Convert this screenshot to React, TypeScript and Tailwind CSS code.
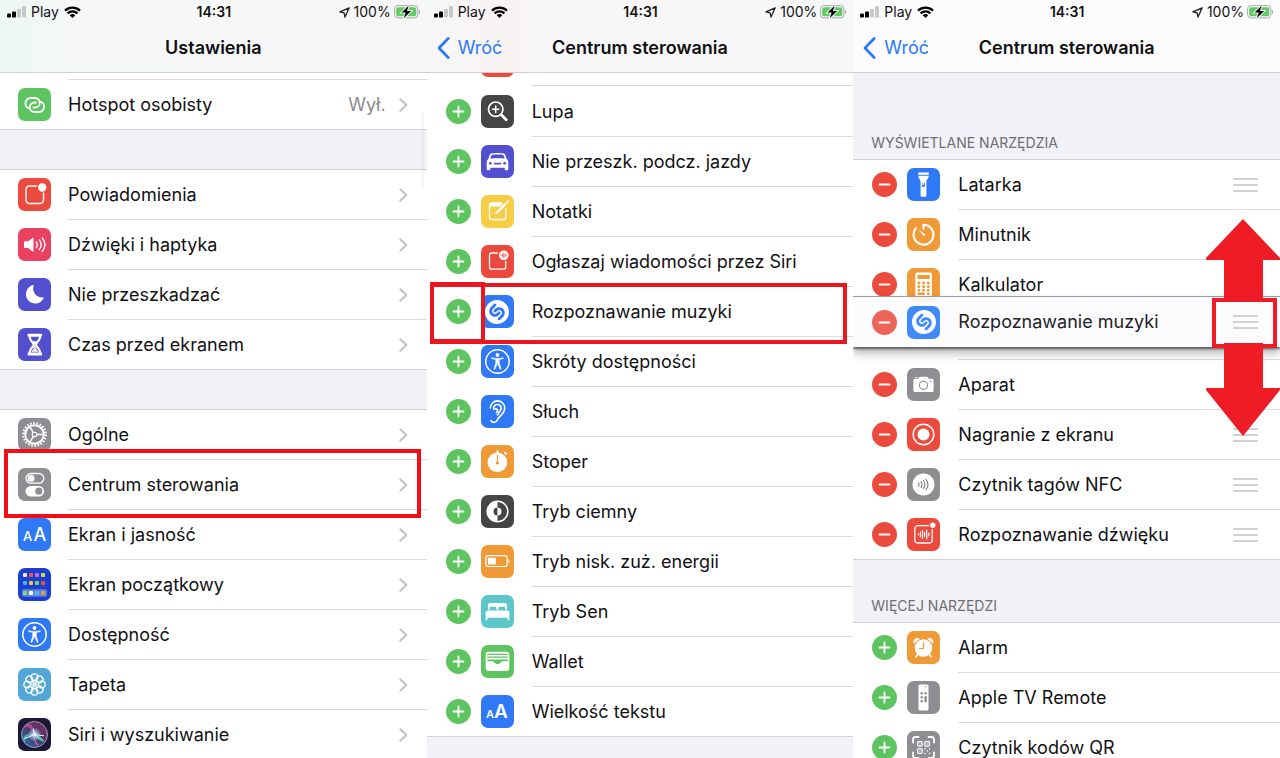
import type { ReactNode } from 'react';
import { SiShazam } from 'react-icons/si';

type Item = {
  label: string;
  tile: string;
  icon: ReactNode;
  value?: string;
  marked?: boolean;
  fixed?: boolean;
};

const BLUE = 'bg-[#2f78f6]';
const GREEN = 'bg-[#5ec460]';
const RED = 'bg-[#ec4a3c]';
const INDIGO = 'bg-[#5350cf]';
const GRAY = 'bg-[#8e8e92]';
const ORANGE = 'bg-[#f09a37]';
const DARK = 'bg-[#454547]';

/* ---------- tile icons, all on a 33 x 33 grid ---------- */

function Glyph({ children }: { children: ReactNode }) {
  return (
    <svg viewBox="0 0 33 33" className="size-full" fill="none" stroke="#fff" strokeLinecap="round" strokeLinejoin="round" aria-hidden="true">
      {children}
    </svg>
  );
}

const hotspot = (
  <Glyph>
    <path strokeWidth="1.8" d="M10.6 20.3A5.4 5.4 0 0 1 12.5 10H17a4.7 4.7 0 0 1 0 9.5h-1.5M22.9 13.7A5.4 5.4 0 0 1 21 24h-4.5a4.7 4.7 0 0 1 0-9.5H18" />
  </Glyph>
);

const notifications = (
  <Glyph>
    <path strokeWidth="1.4" d="M18.5 8h-7A3.5 3.5 0 0 0 8 11.5V22a3.5 3.5 0 0 0 3.5 3.500H22a3.500 3.500 0 0 0 3.500-3.500V15" />
    <circle cx="24.200" cy="9.500" r="4.200" fill="#fff" stroke="none" />
  </Glyph>
);

const sounds = (
  <Glyph>
    <path fill="#fff" stroke="none" d="M6 14.200c0-.6.300-.9.900-.9h3.300l4.300-3.400c.5-.4 1-.2 1 .5v12.700c0 .7-.5.900-1 .5l-4.300-3.500H6.900c-.6 0-.9-.3-.9-.9z" />
    <path strokeWidth="1.400" d="M18.300 13.900c1.200 1.700 1.200 3.800 0 5.600M21.300 11.900c2.300 3 2.300 6.600 0 9.600M24.300 10c3.300 4.200 3.300 9.200 0 13.400" />
  </Glyph>
);

const moon = (
  <Glyph>
    <path fill="#fff" stroke="none" d="M15.700 7.600c.4-.3 0-.7-.5-.5A9.300 9.300 0 1 0 25.700 20c.2-.5-.2-.8-.6-.6A8.800 8.800 0 0 1 15.700 7.600z" />
  </Glyph>
);

const hourglass = (
  <Glyph>
    <path fill="#fff" stroke="none" d="M10.600 5.800h12.500c.7 0 1 .4 1 1v1c0 .5-.3.900-.9 1-.2 3.500-2.700 5.300-4.200 7.900 1.500 2.600 4 4.400 4.200 7.900.6.100.9.500.9 1v1c0 .6-.3 1-1 1H10.600c-.7 0-1-.4-1-1v-1c0-.5.300-.9.900-1 .2-3.500 2.700-5.300 4.200-7.900-1.500-2.600-4-4.400-4.200-7.900-.6-.1-.9-.5-.9-1v-1c0-.6.300-1 1-1z" />
    <path fill="#5350cf" stroke="none" d="M12.700 8.800H21c-.3 2-1.300 3.300-2.600 5.200l-1 1.800v3.500c2 1.300 3.400 3 3.600 5.300h-8.300c.2-2.300 1.600-4 3.600-5.300v-3.500l-1-1.800c-1.300-1.900-2.300-3.200-2.600-5.200z" />
    <path fill="#fff" stroke="none" d="M14.500 13.300h4.700l-1.700 3v4l3 3.400h-7.300l3-3.400v-4z" />
  </Glyph>
);

const gear = (
  <Glyph>
    <circle cx="16.500" cy="16.500" r="11.300" strokeWidth="2.200" strokeLinecap="butt" strokeDasharray="1.600 1.630" />
    <circle cx="16.500" cy="16.500" r="9.300" strokeWidth="2" />
    <circle cx="16.500" cy="16.500" r="2.300" strokeWidth="1.100" />
    <path strokeWidth="1.400" d="M19 16.500h7M15.200 14.400l-3.600-6M15.200 18.600l-3.600 6" />
  </Glyph>
);

const toggles = (
  <Glyph>
    <rect x="8" y="5.500" width="17.800" height="9.700" rx="4.850" strokeWidth="1.300" />
    <circle cx="13" cy="10.300" r="3.500" fill="#fff" stroke="none" />
    <rect x="7.500" y="17.900" width="18.700" height="10.700" rx="5.350" fill="#fff" stroke="none" />
    <circle cx="20.800" cy="23.200" r="3.600" fill="#8e8e92" stroke="none" />
  </Glyph>
);

const displaySize = (
  <Glyph>
    <g fill="#fff" stroke="none" className="font-['Inter',sans-serif] font-medium">
      <text x="5" y="23" fontSize="13">A</text>
      <text x="15.500" y="23" fontSize="18">A</text>
    </g>
  </Glyph>
);

const textSize = (
  <Glyph>
    <g fill="#fff" stroke="none" className="font-['Inter',sans-serif] font-semibold">
      <text x="5" y="23" fontSize="11">A</text>
      <text x="13" y="23" fontSize="19">A</text>
    </g>
  </Glyph>
);

const homeDots = [
  ['#f3ead0', '#ee5a4f', '#d765d8', '#c9e04a'],
  ['#41b4f0', '#f5c23a', '#6fd66a', '#f0512f'],
  ['#7fdc63', '#ffffff', '#55b8f5', '#f29a3a'],
];
const homeRows = [5, 13, 23];

const homeScreen = (
  <Glyph>
    <rect x="4" y="21.200" width="25" height="7.600" rx="2" fill="#5f86dc" stroke="none" />
    {homeDots.map((row, r) =>
      row.map((fill, c) => (
        <rect key={`${r}-${c}`} x={5 + c * 6} y={homeRows[r]} width="4" height="4" rx="1" fill={fill} stroke="none" />
      )),
    )}
  </Glyph>
);

const accessibility = (
  <Glyph>
    <circle cx="16.500" cy="16.500" r="11.700" strokeWidth="1.500" />
    <circle cx="16.500" cy="10" r="1.900" fill="#fff" stroke="none" />
    <path fill="#fff" strokeWidth=".5" d="M10.700 12.700l4.600.7h2.400l4.600-.7v.9l-4 1v3.500l1.800 6-.9.400-2.500-5.800h-.4l-2.500 5.800-.9-.4 1.800-6v-3.500l-4-1z" />
  </Glyph>
);

const wallpaper = (
  <Glyph>
    {[0, 45, 90, 135, 180, 225, 270, 315].map((a) => (
      <circle key={a} cx="16.500" cy="9.200" r="3.300" strokeWidth="1.300" transform={`rotate(${a} 16.500 16.500)`} />
    ))}
    {[0, 60, 120, 180, 240, 300].map((a) => (
      <circle key={a} cx="16.500" cy="14" r="1.800" strokeWidth=".8" transform={`rotate(${a} 16.500 16.500)`} />
    ))}
  </Glyph>
);

const siri = (
  <Glyph>
    <defs>
      <linearGradient id="siri-orb" x1="0" y1="1" x2="1" y2="0">
        <stop offset="0" stopColor="#2b9fd0" />
        <stop offset=".5" stopColor="#59407f" />
        <stop offset="1" stopColor="#a4335f" />
      </linearGradient>
      <radialGradient id="siri-core">
        <stop offset="0" stopColor="#fff" />
        <stop offset=".4" stopColor="#d5f0ff" stopOpacity=".6" />
        <stop offset="1" stopColor="#d5f0ff" stopOpacity="0" />
      </radialGradient>
    </defs>
    <circle cx="16.500" cy="16.500" r="13" fill="url(#siri-orb)" stroke="#a9a7c4" strokeWidth=".9" fillOpacity=".75" />
    <path fill="#e15a9c" fillOpacity=".6" stroke="none" d="M16.500 16.500C12 9 9.500 7.500 5.500 10c3-6 10-7 11 6.500z" />
    <path fill="#3fd6c0" fillOpacity=".7" stroke="none" d="M16.500 16.500C10 16 7 20 6.500 25c-4-6 2-11 10-8.500z" />
    <path fill="#4de0b0" fillOpacity=".8" stroke="none" d="M16.500 16.500c5 1 8 3 9.800 7.500-4.800-1-7.800-3-9.800-7.500z" />
    <path fill="#f17ab6" stroke="none" d="M16 16.500c.8 4 1.500 8 5 11-3.500-.5-5-5-5-11z" />
    <path stroke="#dff6ff" strokeWidth="1.100" d="M7 20.500l9.500-4 9 1.200M16.500 16.500l-1-5.500" />
    <circle cx="16.500" cy="16.500" r="7" fill="url(#siri-core)" stroke="none" />
  </Glyph>
);

const magnifier = (
  <Glyph>
    <circle cx="14.700" cy="14.200" r="7.200" strokeWidth="1.700" />
    <path strokeWidth="1.500" d="M11.500 14.200h6.400M14.700 11v6.400" />
    <path strokeWidth="2.800" d="M20.500 20l4.700 4.700" />
  </Glyph>
);

const car = (
  <Glyph>
    <path fill="#fff" stroke="none" d="M10 8.600c2-.9 11-.9 13 0 1.300.7 2 3 2.600 5.400C27 15 27.300 16 27.300 18v6c0 .9-.4 1.300-1.200 1.300h-1.200c-.8 0-1.200-.4-1.200-1.300v-1.200H9.300V24c0 .9-.4 1.300-1.200 1.300H6.900c-.8 0-1.200-.4-1.200-1.300v-6c0-2 .3-3 1.700-4C8 11.600 8.700 9.300 10 8.600z" />
    <path fill="#5350cf" stroke="none" d="M11 10c2-.6 9-.6 11 0 .8.400 1.300 2 1.700 3.500-4-.5-10.400-.5-14.400 0C9.700 12 10.200 10.400 11 10z" />
    <circle cx="9.300" cy="18.300" r="1.400" fill="#5350cf" stroke="none" />
    <circle cx="23.700" cy="18.300" r="1.400" fill="#5350cf" stroke="none" />
    <path stroke="#5350cf" strokeWidth="1.600" d="M13.500 18.600h6" />
  </Glyph>
);

const notes = (
  <Glyph>
    <path strokeWidth="1.300" d="M24.700 14v8.500a2 2 0 0 1-2 2H10.500a2 2 0 0 1-2-2V10a2 2 0 0 1 2-2H20" />
    <path fill="#fff" stroke="none" d="M8.500 8h14l-3.500 3.500H8.500z" />
    <path stroke="#f7cd46" strokeWidth="4.500" d="M16 17.500l10-10" />
    <path strokeWidth="2.400" strokeLinecap="butt" d="M16 17.300l9-9" />
    <path strokeWidth="2.400" d="M26.600 6.900l.4-.4" />
    <path fill="#fff" stroke="none" d="M14 19.300l1-2.700 1.700 1.700z" />
  </Glyph>
);

const announce = (
  <Glyph>
    <path strokeWidth="1.300" d="M16.500 8H11a2.500 2.500 0 0 0-2.500 2.500v11.200a2.500 2.500 0 0 0 2.500 2.500h11.200a2.500 2.500 0 0 0 2.500-2.500V16.500" />
    <circle cx="22.800" cy="10.300" r="4.800" fill="#fff" stroke="none" />
    <path stroke="#ec4a3c" strokeWidth=".8" d="M20 9.900v.8M21.400 9v2.600M22.800 8v4.600M24.200 9v2.600M25.600 9.900v.8" />
  </Glyph>
);

const ear = (
  <Glyph>
    <g strokeWidth="1.500" transform="translate(2.800 3.700) scale(1.100)">
      <path d="M6 8.500a6.500 6.500 0 1 1 13 0c0 6-5.500 7-6.500 10.500-.7 2.700-5 3.500-6 .8" />
      <path d="M9 9.500c-.3-5.500 7-5.500 6.800-.8-.1 2.600-2.600 3.600-3.300 6" />
      <path d="M10.300 9.300c2.200-.4 3 1.800 1.300 3.200" />
    </g>
  </Glyph>
);

const stopwatch = (
  <Glyph>
    <circle cx="16.400" cy="17.400" r="9.800" fill="#fff" stroke="none" />
    <path strokeWidth="2.400" d="M16.400 6.700v1.800" />
    <path strokeWidth="1.700" d="M23.700 7.700l1.500 1.300" />
    <path stroke="#f09a37" strokeWidth="1.100" d="M16.400 10.200v7" />
    <circle cx="16.400" cy="18" r="1.600" fill="#f09a37" stroke="none" />
  </Glyph>
);

const darkMode = (
  <Glyph>
    <circle cx="16.500" cy="16.500" r="10.300" strokeWidth="1.500" />
    <path fill="#fff" stroke="none" d="M16.500 6.200a10.300 10.300 0 0 0 0 20.600z" />
    <path fill="#454547" stroke="none" d="M16.500 12.500a4 4 0 0 0 0 8z" />
    <path fill="#fff" stroke="none" d="M16.500 12.500a4 4 0 0 1 0 8z" />
  </Glyph>
);

const lowPower = (
  <Glyph>
    <rect x="4.900" y="10.700" width="21.200" height="10.800" rx="2.300" strokeWidth="1.200" />
    <rect x="7" y="12.800" width="7.800" height="6.600" rx=".6" fill="#fff" stroke="none" />
    <path fill="#fff" stroke="none" d="M27.500 14c1.500.6 1.500 3.600 0 4.200z" />
  </Glyph>
);

const bed = (
  <Glyph>
    <path fill="#fff" stroke="none" d="M7 14.500V10c0-1.300.7-2 2-2h15c1.300 0 2 .7 2 2v4.500h-1.800v-1.700c0-.7-.3-1-1-1h-4.500c-.7 0-1 .3-1 1v1.700h-2.400v-1.700c0-.7-.3-1-1-1H9.800c-.7 0-1 .3-1 1v1.700z" />
    <path fill="#fff" stroke="none" d="M7 15.400h19c1.500 0 2.400 1 2.400 2.600v6.500c0 .5-.2.800-.7.800h-.4c-.5 0-.8-.3-.8-.8v-1.700h-20v1.700c0 .5-.3.800-.8.800h-.4c-.5 0-.7-.3-.7-.8V18c0-1.600.9-2.600 2.400-2.600z" />
  </Glyph>
);

const wallet = (
  <Glyph>
    <rect x="4.700" y="6.800" width="23.600" height="19.300" rx="3" fill="#fff" stroke="none" />
    <path stroke="#5ec460" strokeWidth="1.300" strokeLinecap="butt" d="M6.200 9.300h20.600M6.200 12.200h20.600" />
    <path fill="#5ec460" stroke="none" d="M6.200 14.600h20.600v1.600h-5.300c-1.700 0-2.200 2.800-5 2.800s-3.300-2.800-5-2.800H6.200z" />
  </Glyph>
);

const flashlight = (
  <Glyph>
    <path fill="#fff" stroke="none" d="M11.200 4.500h10.600v2.200H11.200zM11.200 7.800h10.600c0 3-2.400 3.500-2.400 6.200v13.500c0 .9-.4 1.300-1.300 1.300h-3.200c-.9 0-1.300-.4-1.300-1.300V14c0-2.700-2.400-3.200-2.400-6.200z" />
    <rect x="15" y="14.500" width="3" height="4.600" rx="1.500" fill="#2f78f6" stroke="none" />
    <circle cx="16.500" cy="16" r=".9" fill="#fff" stroke="none" />
  </Glyph>
);

const timer = (
  <Glyph>
    <path strokeWidth="2.100" strokeLinecap="butt" d="M16.500 11.500V6.800A9.900 9.900 0 1 1 9.700 9.500" />
    <path fill="#fff" stroke="none" d="M11.300 11.600l6.500 4.500c1.200 1-.3 2.600-1.500 1.500z" />
  </Glyph>
);

const calculator = (
  <Glyph>
    <rect x="8.300" y="4.500" width="16.600" height="24" rx="1.800" fill="#fff" stroke="none" />
    <rect x="10.500" y="7" width="12.200" height="4" fill="#f09a37" stroke="none" />
    {[13.700, 17.300, 20.900].map((y) => (
      <g key={y} fill="#f09a37" stroke="none">
        <rect x="10.500" y={y} width="2.800" height="2.600" rx=".8" />
        <rect x="15.200" y={y} width="2.800" height="2.600" rx=".8" />
        <rect x="19.900" y={y} width="2.800" height="2.600" rx=".8" />
      </g>
    ))}
    <rect x="10.500" y="24.500" width="7.500" height="2.400" rx=".8" fill="#f09a37" stroke="none" />
    <rect x="19.900" y="24.500" width="2.800" height="2.400" rx=".8" fill="#f09a37" stroke="none" />
  </Glyph>
);

const camera = (
  <Glyph>
    <path fill="#fff" stroke="none" d="M7.900 10.800h3.300l1-1.500c.3-.4.600-.6 1.100-.6h6.400c.5 0 .8.200 1.100.6l1 1.500h3.300c.9 0 1.500.6 1.500 1.500v10.200c0 .9-.6 1.500-1.500 1.500H7.900c-.9 0-1.500-.6-1.500-1.500V12.300c0-.9.600-1.500 1.500-1.500z" />
    <circle cx="16.500" cy="17.300" r="4.100" stroke="#8e8e92" strokeWidth="1.100" />
    <circle cx="23.800" cy="13.300" r=".8" fill="#8e8e92" stroke="none" />
    <path strokeWidth="1" d="M8.800 9.500h1.400" />
  </Glyph>
);

const record = (
  <Glyph>
    <circle cx="16.500" cy="16.500" r="10.300" strokeWidth="1.500" />
    <circle cx="16.500" cy="16.500" r="6" fill="#fff" stroke="none" />
  </Glyph>
);

const nfc = (
  <Glyph>
    <circle cx="16.500" cy="16.500" r="11" fill="#fff" stroke="none" />
    <path stroke="#7f7f83" strokeWidth="1.100" d="M11.600 14.900c.6 1 .6 2.300 0 3.300M14 13.700c1.200 1.700 1.200 4 0 5.700M16.400 12.500c1.800 2.400 1.800 5.700 0 8.100M18.900 11.300c2.400 3.100 2.400 7.400 0 10.500" />
  </Glyph>
);

const soundRecognition = (
  <Glyph>
    <path strokeWidth="1.300" d="M21.500 7.700H11A3.200 3.200 0 0 0 7.800 11v10.800A3.200 3.200 0 0 0 11 25h11a3.200 3.200 0 0 0 3.200-3.200V11.500" />
    <circle cx="25.800" cy="7.300" r="2.700" fill="#fff" stroke="none" />
    <path strokeWidth="1.200" d="M11.300 15.800v1.200M13.400 13.800v5.200M15.500 12.300v8.200M17.600 14.300v4.200M19.700 12v8.800M21.800 15v2.800" />
  </Glyph>
);

const alarm = (
  <Glyph>
    <path strokeWidth="1.800" d="M10.500 23.500L9 25.700M22.500 23.500l1.500 2.200" />
    <path fill="#fff" stroke="none" d="M6.800 12.800C5.300 9 9.300 5.700 12.800 7.700zM26.200 12.800c1.500-3.800-2.500-7.100-6-5.100z" />
    <circle cx="16.500" cy="17" r="8.700" fill="#fff" stroke="none" />
    <path stroke="#f09a37" strokeWidth="1.200" d="M16.500 11.500v6H12.500" />
  </Glyph>
);

const remote = (
  <Glyph>
    <rect x="11.500" y="3.500" width="10" height="26" rx="1.500" fill="#fff" stroke="none" />
    <g fill="#8e8e92" stroke="none">
      <circle cx="14.700" cy="12.300" r="1.200" />
      <circle cx="18.600" cy="12.300" r="1.200" />
      <circle cx="14.700" cy="16.300" r="1.200" />
      <circle cx="14.700" cy="20.300" r="1.200" />
      <rect x="17.400" y="15.100" width="2.400" height="6.400" rx="1.200" />
      <circle cx="18.600" cy="5.600" r=".6" />
    </g>
  </Glyph>
);

const qr = (
  <Glyph>
    <path strokeWidth="1.800" d="M6 11.500V8.500a2.500 2.500 0 0 1 2.500-2.500h3M21.500 6h3a2.500 2.500 0 0 1 2.500 2.500v3M27 21.500v3a2.500 2.500 0 0 1-2.500 2.500h-3M11.500 27h-3A2.500 2.500 0 0 1 6 24.500v-3" />
    <g strokeWidth="1.200">
      <rect x="10.700" y="10.700" width="4.400" height="4.400" rx=".8" />
      <rect x="17.900" y="10.700" width="4.400" height="4.400" rx=".8" />
      <rect x="10.700" y="17.900" width="4.400" height="4.400" rx=".8" />
      <path d="M17.600 17.600h.6M20.200 19.800h.5M22.500 17.600v.4M17.800 22.300h.6M22.300 22.300h.4M12.900 12.900h.1M20.100 12.900h.1M12.900 20.100h.1" />
    </g>
  </Glyph>
);

const shazam = <SiShazam className="size-6 text-white" aria-hidden="true" />;

/* ---------- data ---------- */

const network: Item[] = [{ label: 'Hotspot osobisty', tile: GREEN, icon: hotspot, value: 'Wył.' }];

const alerts: Item[] = [
  { label: 'Powiadomienia', tile: RED, icon: notifications },
  { label: 'Dźwięki i haptyka', tile: 'bg-[#eb4160]', icon: sounds },
  { label: 'Nie przeszkadzać', tile: INDIGO, icon: moon },
  { label: 'Czas przed ekranem', tile: INDIGO, icon: hourglass },
];

const system: Item[] = [
  { label: 'Ogólne', tile: GRAY, icon: gear },
  { label: 'Centrum sterowania', tile: GRAY, icon: toggles, marked: true },
  { label: 'Ekran i jasność', tile: BLUE, icon: displaySize },
  { label: 'Ekran początkowy', tile: 'bg-[#1b3fd0]', icon: homeScreen },
  { label: 'Dostępność', tile: BLUE, icon: accessibility },
  { label: 'Tapeta', tile: 'bg-[#52a7d6]', icon: wallpaper },
  { label: 'Siri i wyszukiwanie', tile: 'bg-[#1d1838]', icon: siri },
];

const available: Item[] = [
  { label: 'Lupa', tile: DARK, icon: magnifier },
  { label: 'Nie przeszk. podcz. jazdy', tile: INDIGO, icon: car },
  { label: 'Notatki', tile: 'bg-[#f7cd46]', icon: notes },
  { label: 'Ogłaszaj wiadomości przez Siri', tile: RED, icon: announce },
  { label: 'Rozpoznawanie muzyki', tile: BLUE, icon: shazam, marked: true },
  { label: 'Skróty dostępności', tile: BLUE, icon: accessibility },
  { label: 'Słuch', tile: BLUE, icon: ear },
  { label: 'Stoper', tile: ORANGE, icon: stopwatch },
  { label: 'Tryb ciemny', tile: DARK, icon: darkMode },
  { label: 'Tryb nisk. zuż. energii', tile: ORANGE, icon: lowPower },
  { label: 'Tryb Sen', tile: 'bg-[#5dc6c8]', icon: bed },
  { label: 'Wallet', tile: GREEN, icon: wallet },
  { label: 'Wielkość tekstu', tile: BLUE, icon: textSize },
];

const shownTop: Item[] = [
  { label: 'Latarka', tile: BLUE, icon: flashlight },
  { label: 'Minutnik', tile: ORANGE, icon: timer, fixed: true },
  { label: 'Kalkulator', tile: ORANGE, icon: calculator, fixed: true },
];

const shownBottom: Item[] = [
  { label: 'Aparat', tile: GRAY, icon: camera, fixed: true },
  { label: 'Nagranie z ekranu', tile: RED, icon: record },
  { label: 'Czytnik tagów NFC', tile: GRAY, icon: nfc },
  { label: 'Rozpoznawanie dźwięku', tile: RED, icon: soundRecognition },
];

const more: Item[] = [
  { label: 'Alarm', tile: ORANGE, icon: alarm },
  { label: 'Apple TV Remote', tile: GRAY, icon: remote },
  { label: 'Czytnik kodów QR', tile: GRAY, icon: qr },
];

/* ---------- shared parts ---------- */

function StatusBar() {
  return (
    <div className="grid h-6 grid-cols-[1fr_auto_1fr] items-center pr-[6px] pl-[7px] text-sm leading-5">
      <div className="flex items-center">
        <svg viewBox="0 0 19 12" className="h-3 w-[19px]" aria-hidden="true">
          <rect x="0" y="7.500" width="4" height="4" rx="1" />
          <rect x="5" y="5.500" width="4" height="6" rx="1" />
          <rect x="10" y="3" width="4" height="8.500" rx="1" fill="#c6c8c9" />
          <rect x="15" y="0" width="4" height="11.500" rx="1" fill="#c6c8c9" />
        </svg>
        <span className="ml-[5px]">Play</span>
        <svg viewBox="0 0 17 12" className="ml-[5px] h-3 w-[17px]" fill="none" stroke="#000" strokeWidth="2.200" aria-hidden="true">
          <path d="M1 4.600c4.300-4 10.700-4 15 0M3.600 7.400c2.800-2.600 7-2.600 9.800 0" />
          <path fill="#000" stroke="none" d="M8.500 12L5.700 9.200c1.600-1.500 4-1.500 5.600 0z" />
        </svg>
      </div>
      <span className="font-semibold">14:31</span>
      <div className="flex items-center justify-end">
        <svg viewBox="0 0 11 11" className="mr-1 size-[11px]" fill="none" stroke="#222" strokeWidth="1.300" strokeLinejoin="round" aria-hidden="true">
          <path d="M10.200.8L.9 4.900l4.200.9.900 4.200z" />
        </svg>
        <span>100%</span>
        <svg viewBox="0 0 27 14" className="ml-[3px] h-[14px] w-[27px]" aria-hidden="true">
          <rect x=".6" y=".6" width="23.300" height="12.300" rx="3.300" fill="none" stroke="#a5a7a8" />
          <rect x="2.200" y="2.200" width="20.100" height="9.100" rx="2" fill="#5fcb62" />
          <path fill="#a5a7a8" d="M25 4.700c1.600.6 1.600 3.500 0 4.100z" />
          <path stroke="#f7f7f7" strokeWidth="2" paintOrder="stroke" d="M14.800.6L7.600 7.600h4.100l-2 5.600 7.400-7.200h-4.200z" />
        </svg>
      </div>
    </div>
  );
}

function Header({ title, back, className }: { title: string; back?: boolean; className: string }) {
  return (
    <header className={`relative z-10 flex h-[73px] shrink-0 flex-col border-b border-[#cfcfd3] ${className}`}>
      <StatusBar />
      <div className="grid flex-1 grid-cols-[1fr_auto_1fr] items-center">
        <div>
          {back && (
            <a href="#back" className="flex items-center gap-2 pl-[10px] text-[18px] leading-6 text-[#2a7af7]">
              <svg viewBox="0 0 13 22" className="h-[22px] w-[13px]" fill="none" stroke="currentColor" strokeWidth="2.700" strokeLinecap="round" strokeLinejoin="round" aria-hidden="true">
                <path d="M11.200 1.500L2 11l9.200 9.500" />
              </svg>
              Wróć
            </a>
          )}
        </div>
        <h1 className="text-[18px] leading-6 font-semibold">{title}</h1>
        <div />
      </div>
    </header>
  );
}

function Tile({ item }: { item: Item }) {
  return (
    <span className={`flex size-[33px] shrink-0 items-center justify-center overflow-hidden rounded-[7px] ${item.tile}`}>
      {item.icon}
    </span>
  );
}

function SettingsGroup({ items }: { items: Item[] }) {
  return (
    <ul className="bg-white">
      {items.map((item) => (
        <li key={item.label} className="group relative h-[50px]">
          <a href="#open" className="flex h-full items-center group-last:border-b group-last:border-[#d3d3d7]">
            <span className="flex h-full items-center pr-[17px] pb-px pl-[18px] group-last:pb-0">
              <Tile item={item} />
            </span>
            <span className="flex h-full flex-1 items-center border-b border-[#dcdcde] pr-[19px] group-last:border-b-0">
              <span className="flex-1">{item.label}</span>
              {item.value && <span className="mr-[13px] text-[#8b8b8f]">{item.value}</span>}
              <svg viewBox="0 0 9 14" className="h-[14px] w-[9px]" fill="none" stroke="#c2c2c5" strokeWidth="1.900" strokeLinecap="round" strokeLinejoin="round" aria-hidden="true">
                <path d="M1.300 1.200L7.300 7l-6 5.800" />
              </svg>
            </span>
          </a>
          {item.marked && <div className="absolute -top-[11px] right-[6px] -bottom-2 left-1 z-10 border-4 border-[#f40c17]" />}
        </li>
      ))}
    </ul>
  );
}

function RoundButton({ kind, label }: { kind: 'add' | 'remove'; label: string }) {
  const add = kind === 'add';
  return (
    <button
      type="button"
      aria-label={`${add ? 'Dodaj' : 'Usuń'} ${label}`}
      className={`flex size-[25px] shrink-0 items-center justify-center rounded-full ${add ? GREEN : RED}`}
    >
      <svg viewBox="0 0 13 13" className="size-[13px]" stroke="#fff" strokeWidth="1.800" strokeLinecap="round" aria-hidden="true">
        <path d={add ? 'M1.500 6.500h10M6.500 1.500v10' : 'M1.500 6.500h10'} />
      </svg>
    </button>
  );
}

function Handle({ label }: { label: string }) {
  return (
    <button type="button" aria-label={`Przenieś ${label}`} className="flex w-[25px] flex-col gap-1">
      <span className="h-0.5 w-full bg-[#d2d2d4]" />
      <span className="h-0.5 w-full bg-[#d2d2d4]" />
      <span className="h-0.5 w-full bg-[#d2d2d4]" />
    </button>
  );
}

function ToolContent({ item, kind, movable }: { item: Item; kind: 'add' | 'remove'; movable?: boolean }) {
  return (
    <>
      <span className="flex h-full items-center gap-[10px] pr-[18px] pb-px pl-[19px] group-last:pb-0">
        <RoundButton kind={kind} label={item.label} />
        <Tile item={item} />
      </span>
      <span className="flex h-full flex-1 items-center justify-between border-b border-[#dcdcde] pr-[22px] group-last:border-b-0">
        {item.label}
        {movable && !item.fixed && <Handle label={item.label} />}
      </span>
    </>
  );
}

function ToolRow({ item, kind, movable }: { item: Item; kind: 'add' | 'remove'; movable?: boolean }) {
  return (
    <li className="group relative flex h-[50px] shrink-0 items-center last:border-b last:border-[#d3d3d7]">
      <ToolContent item={item} kind={kind} movable={movable} />
      {item.marked && (
        <>
          <div className="absolute -top-1 right-[6px] -bottom-[7px] left-[3px] z-10 border-4 border-[#ec1620]" />
          <div className="absolute -top-[5px] -bottom-[7px] left-[3px] z-10 w-[55px] border-x-4 border-y-[5px] border-[#ec1620]" />
        </>
      )}
    </li>
  );
}

function LiftedRow() {
  const item: Item = { label: 'Rozpoznawanie muzyki', tile: 'bg-[#3f8af8]', icon: shazam };
  return (
    <li className="relative flex h-[50px] pl-[105px]">
      <span className="flex-1 border-b border-[#dcdcde]" />
      <div className="absolute inset-x-0 -top-[14px] z-10 h-[51px] border-t border-[#9c9c9f] bg-[#fcfcfe]/90 shadow-[0_2px_2px_rgba(0,0,0,0.5),0_6px_9px_rgba(0,0,0,0.3)]">
        <div className="flex h-full items-center text-[#242426]">
          <span className="flex h-full items-center gap-[10px] pr-[18px] pl-[19px]">
            <span className="opacity-85">
              <RoundButton kind="remove" label={item.label} />
            </span>
            <Tile item={item} />
          </span>
          <span className="flex flex-1 items-center justify-between pr-[22px]">
            {item.label}
            <Handle label={item.label} />
          </span>
        </div>
        <svg viewBox="0 0 74 218" className="absolute -top-[78px] right-0 h-[218px] w-[74px]" fill="#ef1c25" aria-hidden="true">
          <path d="M37 0l37 39q1 2-1 2H57v39H18V41H1q-2 0-1-2zM37 217L0 171q-1-2 1-2h17v-45h39v45h16q2 0 1 2z" />
          <rect x="8" y="81" width="61" height="46" fill="none" stroke="#ef1c25" strokeWidth="4" />
        </svg>
      </div>
    </li>
  );
}

function SectionTitle({ children, className }: { children: ReactNode; className: string }) {
  return (
    <h2 className={`flex shrink-0 items-end border-b border-[#d0d0d5] pb-[6px] pl-[18px] text-sm leading-5 text-[#6e6e73] uppercase ${className}`}>
      {children}
    </h2>
  );
}

/* ---------- the three screens ---------- */

function SettingsScreen() {
  return (
    <section className="relative flex flex-col overflow-hidden bg-[#f1f1f7]">
      <Header title="Ustawienia" className="bg-linear-to-r from-[#edf8f6] via-[#f6f7f7] via-20% to-[#f7f7f7]" />
      <div className="flex h-[7px] shrink-0 bg-white pl-[68px]">
        <span className="flex-1 border-b border-[#dcdcde]" />
      </div>
      <SettingsGroup items={network} />
      <div className="h-10 shrink-0 border-b border-[#d3d3d7]" />
      <SettingsGroup items={alerts} />
      <div className="h-10 shrink-0 border-b border-[#d3d3d7]" />
      <SettingsGroup items={system} />
      <div className="absolute top-[113px] right-[3px] h-[77px] w-[3px] rounded-full bg-black/3" />
    </section>
  );
}

function AvailableToolsScreen() {
  return (
    <section className="flex flex-col overflow-hidden bg-[#f1f1f7]">
      <Header title="Centrum sterowania" back className="bg-linear-to-r from-[#f6f7f7] via-[#f9f3f3] via-18% to-[#f7f7f7] to-30%" />
      <div className="flex h-[13px] shrink-0 items-end overflow-hidden bg-white">
        <div className="flex h-[50px] flex-1 items-center">
          <ToolContent item={{ label: '', tile: RED, icon: null }} kind="add" />
        </div>
      </div>
      <ul className="bg-white pt-px">
        {available.map((item) => (
          <ToolRow key={item.label} item={item} kind="add" />
        ))}
      </ul>
    </section>
  );
}

function ReorderScreen() {
  return (
    <section className="flex flex-col overflow-hidden bg-[#f1f1f7]">
      <Header title="Centrum sterowania" back className="bg-[#fcfcfd]" />
      <SectionTitle className="h-[87px]">Wyświetlane narzędzia</SectionTitle>
      <ul className="bg-white">
        {shownTop.map((item) => (
          <ToolRow key={item.label} item={item} kind="remove" movable />
        ))}
        <LiftedRow />
        {shownBottom.map((item) => (
          <ToolRow key={item.label} item={item} kind="remove" movable />
        ))}
      </ul>
      <SectionTitle className="h-[63px]">Więcej narzędzi</SectionTitle>
      <ul className="bg-white">
        {more.map((item) => (
          <ToolRow key={item.label} item={item} kind="add" />
        ))}
      </ul>
    </section>
  );
}

export default function App() {
  return (
    <main className="grid h-screen grid-cols-3 overflow-hidden bg-white font-['Inter','Liberation_Sans',sans-serif] text-[18px] leading-6 text-[#111113]">
      <SettingsScreen />
      <AvailableToolsScreen />
      <ReorderScreen />
    </main>
  );
}
